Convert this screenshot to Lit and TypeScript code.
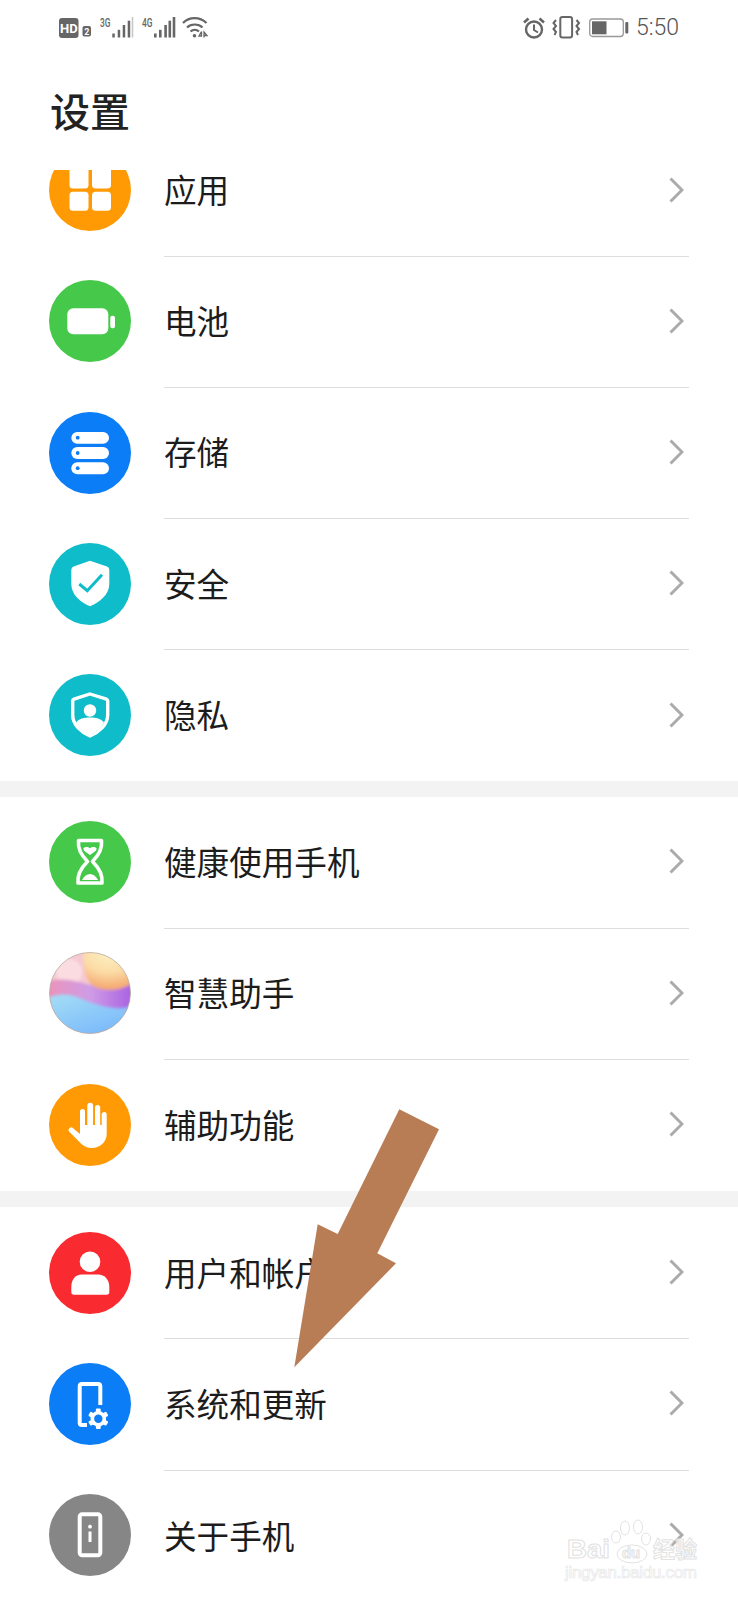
import { LitElement, html, svg, css } from 'lit';
import { customElement } from 'lit/decorators.js';

const BLUE = '#0a7df7';
const TEAL = '#0fbcc9';
const GREEN = '#46c94b';
const ORANGE = '#ff9a05';

// glyphs are drawn on an 82x82 circle
const appsIcon = svg`
  <circle cx="41" cy="41" r="41" fill=${ORANGE}></circle>
  <rect x="20.5" y="12" width="19" height="27.5" rx="3.5" fill="#fff"></rect>
  <rect x="43" y="12" width="19" height="27.5" rx="3.5" fill="#fff"></rect>
  <rect x="20.5" y="42.7" width="19" height="19" rx="3.5" fill="#fff"></rect>
  <rect x="43" y="42.7" width="19" height="19" rx="3.5" fill="#fff"></rect>`;

const batteryIcon = svg`
  <circle cx="41" cy="41" r="41" fill=${GREEN}></circle>
  <rect x="18.3" y="28.3" width="41" height="26" rx="6" fill="#fff"></rect>
  <rect x="61.3" y="35.7" width="4.7" height="12.6" rx="2" fill="#fff"></rect>`;

const storageIcon = svg`
  <circle cx="41" cy="41" r="41" fill=${BLUE}></circle>
  <rect x="22.3" y="20" width="37.7" height="11.8" rx="5.9" fill="#fff"></rect>
  <rect x="22.3" y="35" width="37.7" height="12" rx="6" fill="#fff"></rect>
  <rect x="22.3" y="50.3" width="37.7" height="12" rx="6" fill="#fff"></rect>
  <circle cx="28.7" cy="25.7" r="1.9" fill=${BLUE}></circle>
  <circle cx="28.7" cy="41" r="1.9" fill=${BLUE}></circle>
  <circle cx="28.7" cy="56.2" r="1.9" fill=${BLUE}></circle>`;

const securityIcon = svg`
  <circle cx="41" cy="41" r="41" fill=${TEAL}></circle>
  <path d="M41 17.7 L58 23.6 Q60.3 24.4 60.3 27 V41 C60.3 52 50 59.5 41 63.3 C32 59.5 22.3 52 22.3 41 V27 Q22.3 24.4 24.6 23.6 Z" fill="#fff"></path>
  <path d="M30.3 41 L38.3 47.7 L53 31.7" fill="none" stroke=${TEAL} stroke-width="3"></path>`;

const privacyIcon = svg`
  <circle cx="41" cy="41" r="41" fill=${TEAL}></circle>
  <path d="M41 20 L57.5 25.2 Q58.7 25.7 58.7 27 V41 C58.7 51 49.5 58.5 41 62 C32.5 58.5 23.7 51 23.7 41 V27 Q23.7 25.7 25 25.2 Z" fill="none" stroke="#fff" stroke-width="3.4"></path>
  <circle cx="41" cy="36.5" r="6.2" fill="#fff"></circle>
  <path d="M27 48.5 C30 44.5 35 43.5 41 43.5 C47 43.5 52 44.5 55 48.5 C52 54 46 58.5 41 60.5 C36 58.5 30 54 27 48.5 Z" fill="#fff"></path>`;

const healthIcon = svg`
  <circle cx="41" cy="41" r="41" fill=${GREEN}></circle>
  <path d="M29.5 19.5 H52.5 C53.5 28 49 35 43.5 40.5 C49 46 54 54 53 62 H29 C28 54 33 46 38.5 40.5 C33 35 28.5 28 29.5 19.5 Z" fill="none" stroke="#fff" stroke-width="3.6" stroke-linejoin="round"></path>
  <path d="M41 34 C37 31 34 29.5 34.5 27.5 C35.2 25.5 39 25.5 41 27.2 C43 25.5 46.8 25.5 47.5 27.5 C48 29.5 45 31 41 34 Z" fill="#fff"></path>
  <path d="M33 59 C35 55 38 53 41 53 C44 53 47 55 49 59 Z" fill="#fff"></path>`;

const assistantIcon = svg`
  <defs>
    <clipPath id="ball"><circle cx="41" cy="41" r="40.5"></circle></clipPath>
    <filter id="soft" x="-10%" y="-10%" width="120%" height="120%"><feGaussianBlur stdDeviation="1.4"></feGaussianBlur></filter>
    <radialGradient id="sun" cx="0.5" cy="0.05" r="0.95">
      <stop offset="0" stop-color="#fdf2c6"></stop>
      <stop offset="0.55" stop-color="#fcdca6"></stop>
      <stop offset="1" stop-color="#f4a56c"></stop>
    </radialGradient>
    <linearGradient id="plum" x1="0" x2="1">
      <stop offset="0" stop-color="#ec93b6"></stop>
      <stop offset="0.5" stop-color="#cf9ce6"></stop>
      <stop offset="1" stop-color="#a65de2"></stop>
    </linearGradient>
    <linearGradient id="sky" x1="0" y1="0" x2="0.7" y2="1">
      <stop offset="0" stop-color="#a6def6"></stop>
      <stop offset="1" stop-color="#78b8fb"></stop>
    </linearGradient>
  </defs>
  <g clip-path="url(#ball)">
    <g filter="url(#soft)">
      <rect x="-4" y="-4" width="90" height="90" fill="#f5c9d2"></rect>
      <circle cx="20" cy="20" r="13" fill="#fbdde1"></circle>
      <path d="M-4 30 C8 25 24 28 38 32 C50 36 66 32 86 28 V62 H-4 Z" fill="url(#plum)"></path>
      <path d="M34 -4 H86 V29 C76 38 60 40 48 36 C38 32 34 22 34 -4 Z" fill="url(#sun)"></path>
    </g>
    <path d="M-2 46 C8 42 18 41 28 45 C40 50 52 55 66 56 C72 56.5 78 56 84 53 V84 H-2 Z" fill="url(#sky)" filter="url(#soft)"></path>
  </g>
  <circle cx="41" cy="41" r="40.5" fill="none" stroke="#b9a9a0" stroke-width="0.8"></circle>`;

const handIcon = svg`
  <circle cx="41" cy="41" r="41" fill=${ORANGE}></circle>
  <path d="M31 46 V27.5 a2.5 2.5 0 0 1 5 0 V41 H38.3 V21.7 a2.9 2.9 0 0 1 5.8 0 V41 H46 V23.5 a2.6 2.6 0 0 1 5.2 0 V41 H52.7 V30.5 a2.5 2.5 0 0 1 5 0 V50 C57.7 58 51 64 42.5 64 C37 64 33 61 30 57.5 L20.5 48 a2.6 2.6 0 0 1 3.6 -3.8 L31 50 Z" fill="#fff"></path>`;

const userIcon = svg`
  <circle cx="41" cy="41" r="41" fill="#f92b30"></circle>
  <circle cx="41" cy="29.7" r="10.3" fill="#fff"></circle>
  <path d="M33 42.5 H49 C56 42.5 60.3 48 60.3 55 V60 Q60.3 62.7 57.5 62.7 H25 Q22.3 62.7 22.3 60 V55 C22.3 48 26 42.5 33 42.5 Z" fill="#fff"></path>`;

const systemIcon = svg`
  <circle cx="41" cy="41" r="41" fill=${BLUE}></circle>
  <path d="M38 62 H33 Q30.7 62 30.7 59.7 V23.3 Q30.7 21 33 21 H49 Q51.3 21 51.3 23.3 V42" fill="none" stroke="#fff" stroke-width="4"></path>
  <g transform="translate(49.3 55.7)">
    <circle r="7.8" fill="#fff"></circle>
    ${[0, 60, 120, 180, 240, 300].map(
      (a) => svg`<rect x="-2.4" y="-10.3" width="4.8" height="5" rx="1" fill="#fff" transform="rotate(${a})"></rect>`
    )}
    <circle r="4.2" fill=${BLUE}></circle>
  </g>`;

const aboutIcon = svg`
  <circle cx="41" cy="41" r="41" fill="#868686"></circle>
  <rect x="30.7" y="20.3" width="20.6" height="41" rx="2.5" fill="none" stroke="#fff" stroke-width="4"></rect>
  <circle cx="41" cy="32.7" r="1.9" fill="#fff"></circle>
  <rect x="39.5" y="37.5" width="3" height="10.5" fill="#fff"></rect>`;

type Row = { label: string; icon: unknown };

const sections: Row[][] = [
  [
    { label: '应用', icon: appsIcon },
    { label: '电池', icon: batteryIcon },
    { label: '存储', icon: storageIcon },
    { label: '安全', icon: securityIcon },
    { label: '隐私', icon: privacyIcon },
  ],
  [
    { label: '健康使用手机', icon: healthIcon },
    { label: '智慧助手', icon: assistantIcon },
    { label: '辅助功能', icon: handIcon },
  ],
  [
    { label: '用户和帐户', icon: userIcon },
    { label: '系统和更新', icon: systemIcon },
    { label: '关于手机', icon: aboutIcon },
  ],
];

@customElement('app-root')
export class AppRoot extends LitElement {
  static styles = css`
    :host {
      display: flex;
      flex-direction: column;
      position: relative;
      width: 738px;
      height: 1600px;
      overflow: hidden;
      background: #fff;
      color: #1c1c1c;
      font-family: 'Noto Sans CJK SC', 'Noto Sans', sans-serif;
    }

    /* ===== status bar ===== */
    .status {
      flex: none;
      height: 58px;
      display: flex;
      justify-content: space-between;
      padding: 16px 59px 0 59px;
      box-sizing: border-box;
    }
    .status__group {
      display: flex;
      align-items: flex-start;
    }
    .status svg {
      display: block;
      flex: none;
    }
    .status__time {
      font-family: Roboto, sans-serif;
      font-size: 23px;
      font-weight: 300;
      line-height: 24px;
      color: #555;
      margin-left: 6px;
    }
    .status text {
      font-family: 'Roboto', sans-serif;
      fill: #666;
    }

    /* ===== title ===== */
    .title {
      flex: none;
      height: 112px;
      box-sizing: border-box;
      display: flex;
      align-items: center;
      padding: 0 0 8px 50px;
      font-size: 40px;
      font-weight: 500;
      color: #222;
    }

    /* ===== list ===== */
    .list {
      flex: 1;
      min-height: 0;
      overflow: hidden;
    }
    /* list is scrolled: the first row starts above the clip edge */
    .list__inner {
      margin-top: -44.6px;
    }
    .band {
      height: 16px;
      background: #f3f3f3;
    }
    .section:last-child {
      padding-top: 1.3px;
    }
    .row {
      height: 131.2px;
      display: flex;
      align-items: center;
      padding-left: 49px;
    }
    .row__icon {
      flex: none;
      display: block;
      width: 82px;
      height: 82px;
      margin-top: -1.5px;
    }
    .row__body {
      flex: 1;
      align-self: stretch;
      display: flex;
      align-items: center;
      justify-content: space-between;
      margin: 0 49px 0 33px;
      padding-right: 5px;
      border-bottom: 1px solid #dedede;
    }
    .row:last-child .row__body {
      border-bottom: none;
    }
    .row__label {
      display: block;
      font-size: 32.6px;
      line-height: 36px;
      font-weight: 400;
      margin-top: -3px;
    }
    .row__chevron {
      display: block;
      width: 15px;
      height: 26px;
      margin-top: -2px;
    }

    /* ===== things lying over the page ===== */
    .arrow {
      position: absolute;
      left: 0;
      top: 0;
    }
    .watermark {
      position: absolute;
      left: 560px;
      top: 1515px;
    }
    .watermark text {
      fill: rgba(255, 255, 255, 0.6);
      stroke: #e2e2e2;
      stroke-width: 1;
      font-family: 'Liberation Sans', sans-serif;
    }
    .watermark .cjk {
      font-family: 'Noto Sans CJK SC', sans-serif;
    }
    .watermark .url {
      stroke: #e8e8e8;
      stroke-width: 0.7;
    }
  `;

  private renderStatusBar() {
    return html`
      <div class="status">
        <div class="status__group">
          <svg width="34" height="24" viewBox="0 0 34 24">
            <rect x="0" y="2" width="19.5" height="20" rx="3" fill="#666"></rect>
            <text x="9.8" y="16.8" font-size="13" font-weight="700" text-anchor="middle" style="fill:#fff">HD</text>
            <rect x="23.5" y="10" width="8.5" height="10.5" rx="2" fill="#666"></rect>
            <text x="27.8" y="18.5" font-size="9" font-weight="700" text-anchor="middle" style="fill:#fff">2</text>
          </svg>
          <svg width="44" height="24" viewBox="0 0 44 24" style="margin-left:7px">
            <text x="0" y="10.5" font-size="13" font-weight="500" textLength="10.5" lengthAdjust="spacingAndGlyphs">3G</text>
            <rect x="12.3" y="17.5" width="2.5" height="4" fill="#666"></rect>
            <rect x="17.7" y="13.8" width="2.5" height="7.7" fill="#666"></rect>
            <rect x="22.7" y="9" width="2.5" height="12.5" fill="#666"></rect>
            <rect x="27.7" y="4.7" width="2.5" height="16.8" fill="#666"></rect>
            <rect x="31.7" y="1" width="1.6" height="20.5" fill="#c8c8c8"></rect>
          </svg>
          <svg width="36" height="24" viewBox="0 0 36 24" style="margin-left:-2px">
            <text x="0" y="10.5" font-size="13" font-weight="500" textLength="10.5" lengthAdjust="spacingAndGlyphs">4G</text>
            <rect x="12" y="17.5" width="2.6" height="4" fill="#666"></rect>
            <rect x="17" y="13.8" width="2.6" height="7.7" fill="#666"></rect>
            <rect x="22.3" y="9" width="2.6" height="12.5" fill="#666"></rect>
            <rect x="26.5" y="4.7" width="2.6" height="16.8" fill="#666"></rect>
            <rect x="30.7" y="1" width="2.6" height="20.5" fill="#666"></rect>
          </svg>
          <svg width="26" height="24" viewBox="0 0 26 24" style="margin-left:4px">
            <path d="M1 7 C7 0.5 18 0.5 24.5 7" fill="none" stroke="#666" stroke-width="2.2"></path>
            <path d="M5 11.5 C9 7.5 16.5 7.5 20.5 11.5" fill="none" stroke="#666" stroke-width="2.2"></path>
            <path d="M8.5 15.5 C11 13.3 14.5 13.3 17 15.5" fill="none" stroke="#666" stroke-width="2.2"></path>
            <circle cx="12.5" cy="19.7" r="1.8" fill="#666"></circle>
            <path d="M19.5 15.5 L17 20 H19.5 V15.5 M22 21.5 V16 L25 19.5 H22" fill="none" stroke="#666" stroke-width="1.3"></path>
          </svg>
        </div>
        <div class="status__group">
          <svg width="22" height="24" viewBox="0 0 22 24">
            <circle cx="11" cy="13.5" r="8" fill="none" stroke="#666" stroke-width="2.4"></circle>
            <path d="M11 8.5 V14 L15 16.5" fill="none" stroke="#666" stroke-width="2"></path>
            <path d="M1 6.5 L5.5 2.5 M21 6.5 L16.5 2.5" stroke="#666" stroke-width="2.6"></path>
          </svg>
          <svg width="30" height="24" viewBox="0 0 30 24" style="margin-left:5.7px">
            <rect x="9.3" y="1" width="11.8" height="20.5" rx="2.2" fill="none" stroke="#666" stroke-width="2"></rect>
            <path d="M5 4 L2.5 7 L5 10 L2.5 13 L5 16 L3.5 19 M25.5 4 L28 7 L25.5 10 L28 13 L25.5 16 L27 19" fill="none" stroke="#666" stroke-width="2"></path>
          </svg>
          <svg width="41" height="24" viewBox="0 0 41 24" style="margin-left:8.3px">
            <rect x="0.7" y="3" width="33.6" height="17.5" rx="3" fill="none" stroke="#999" stroke-width="1.3"></rect>
            <rect x="3" y="5.3" width="14.5" height="13" fill="#666"></rect>
            <rect x="36.3" y="6" width="3" height="11.5" rx="1" fill="#666"></rect>
          </svg>
          <span class="status__time">5:50</span>
        </div>
      </div>
    `;
  }

  private renderRow(row: Row) {
    return html`
      <div class="row">
        <svg class="row__icon" viewBox="0 0 82 82">${row.icon}</svg>
        <div class="row__body">
          <span class="row__label">${row.label}</span>
          <svg class="row__chevron" viewBox="0 0 15 26">
            <path d="M1.5 1.5 L13 13 L1.5 24.5" fill="none" stroke="#ababab" stroke-width="3"></path>
          </svg>
        </div>
      </div>
    `;
  }

  render() {
    return html`
      ${this.renderStatusBar()}
      <div class="title">设置</div>
      <div class="list">
        <div class="list__inner">
          ${sections.map(
            (rows, i) => html`
              ${i > 0 ? html`<div class="band"></div>` : ''}
              <div class="section">${rows.map((r) => this.renderRow(r))}</div>
            `
          )}
        </div>
      </div>

      <svg class="arrow" width="738" height="1600" viewBox="0 0 738 1600">
        <polygon
          points="294.3,1367.3 317.7,1224.3 337.7,1234 399.3,1109.3 439,1129.3 377.3,1253.3 396,1263.3"
          fill="#b97d56"
        ></polygon>
      </svg>

      <svg class="watermark" width="178" height="80" viewBox="0 0 178 80">
        <text x="7" y="43" font-size="25" font-weight="700" textLength="43" lengthAdjust="spacingAndGlyphs">Bai</text>
        <g fill="rgba(255,255,255,0.6)" stroke="#e2e2e2" stroke-width="1">
          <ellipse cx="72" cy="39" rx="15" ry="9"></ellipse>
          <ellipse cx="65" cy="13" rx="4.5" ry="7"></ellipse>
          <ellipse cx="78" cy="12" rx="4.5" ry="7"></ellipse>
          <ellipse cx="56" cy="22" rx="4.5" ry="6"></ellipse>
          <ellipse cx="86" cy="24" rx="4.5" ry="6"></ellipse>
        </g>
        <text x="62" y="43" font-size="14" font-weight="700" textLength="18" lengthAdjust="spacingAndGlyphs">du</text>
        <text class="cjk" x="93" y="42" font-size="22" font-weight="700">经验</text>
        <text class="url" x="5" y="63" font-size="17" textLength="132">jingyan.baidu.com</text>
      </svg>
    `;
  }
}

declare global {
  interface HTMLElementTagNameMap {
    'app-root': AppRoot;
  }
}
